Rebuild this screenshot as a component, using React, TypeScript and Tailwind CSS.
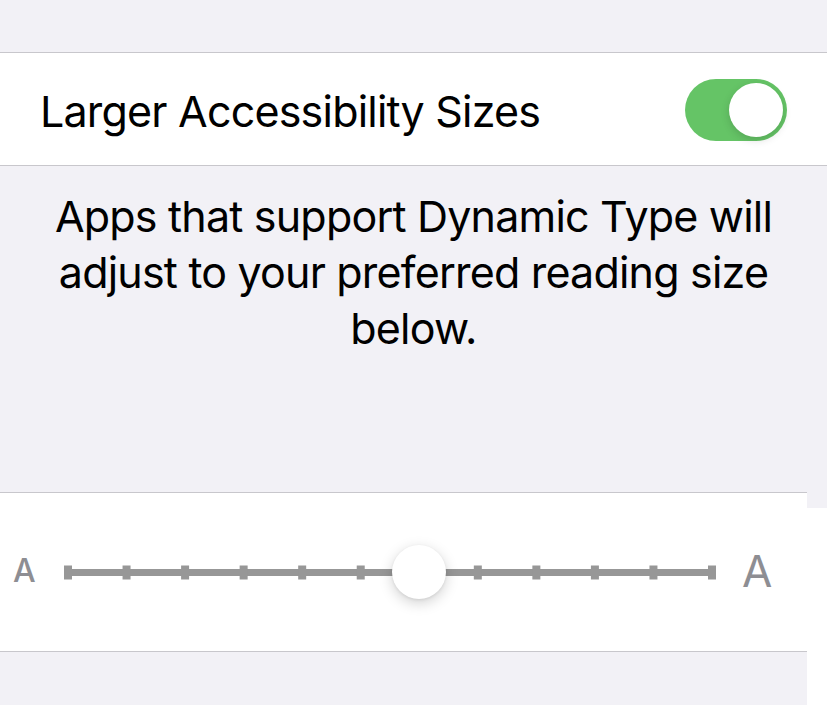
import React from "react";

const ticks = Array.from({ length: 12 }, (_, i) => i);

function Toggle() {
  return (
    <div className="w-[102px] h-[62px] rounded-full bg-[#65c466] p-[4px] flex justify-end">
      <div className="w-[54px] h-[54px] rounded-full bg-white shadow-[0_3px_8px_rgba(0,0,0,0.15)]" />
    </div>
  );
}

function TextSlider() {
  // 12 stops, knob on index 6
  const width = 652;
  const step = (width - 8) / 11;
  return (
    <div className="relative w-[652px] h-[60px]">
      <svg width="652" height="60" className="absolute left-0 top-0">
        <rect x="4" y="27" width={width - 8} height="7" fill="#979797" />
        {ticks.map((i) => (
          <rect key={i} x={i * step} y="23.5" width="8" height="14" fill="#979797" />
        ))}
      </svg>
      <div
        className="absolute top-[3px] w-[54px] h-[54px] rounded-full bg-white shadow-[0_4px_14px_rgba(0,0,0,0.18),0_1px_3px_rgba(0,0,0,0.08)]"
        style={{ left: 6 * step + 4 - 27 }}
      />
    </div>
  );
}

export default function App() {
  return (
    <div
      className="h-[705px] w-[827px] overflow-hidden bg-[#f2f1f6] flex flex-col"
      style={{ fontFamily: "Inter, 'Liberation Sans', sans-serif" }}
    >
      <div className="h-[53px] border-b border-[#c8c7cc]" />
      <div className="h-[113px] bg-white border-b border-[#c8c7cc] flex items-center justify-between pl-[40px] pr-[40px]">
        <span className="mt-[5px] text-[43px] tracking-[-0.8px] text-black">Larger Accessibility Sizes</span>
        <div className="mt-[2px]">
          <Toggle />
        </div>
      </div>
      <div className="h-[326px] pt-[22px] px-[40px] text-center text-[43px] leading-[56px] tracking-[-0.8px] text-black">
        Apps that support Dynamic Type will adjust to your preferred reading size below.
      </div>
      <div className="flex-1 flex">
        <div className="w-[807px] flex flex-col">
          <div className="h-[160px] bg-white border-t border-b border-[#c8c7cc] flex items-center pl-[13px]">
            <span className="w-[51px] text-[32px] font-medium text-[#8e8e93] leading-none pb-[2px]">A</span>
            <TextSlider />
            <span className="ml-[26px] text-[44px] text-[#8e8e93] leading-none pb-[2px]">A</span>
          </div>
        </div>
        <div className="flex-1 flex flex-col">
          <div className="h-[16px]" />
          <div className="flex-1 bg-white" />
        </div>
      </div>
    </div>
  );
}
